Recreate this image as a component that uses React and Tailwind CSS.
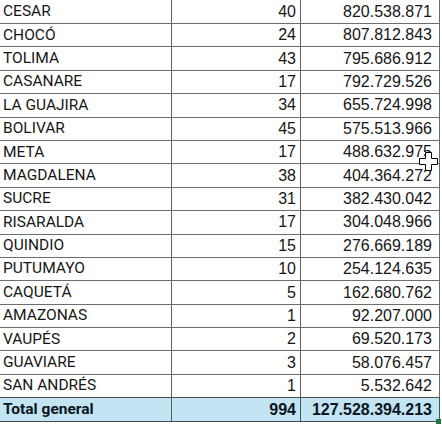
import React from "react";

const rows = [
  ["CESAR", "40", "820.538.871"],
  ["CHOCÓ", "24", "807.812.843"],
  ["TOLIMA", "43", "795.686.912"],
  ["CASANARE", "17", "792.729.526"],
  ["LA GUAJIRA", "34", "655.724.998"],
  ["BOLIVAR", "45", "575.513.966"],
  ["META", "17", "488.632.975"],
  ["MAGDALENA", "38", "404.364.272"],
  ["SUCRE", "31", "382.430.042"],
  ["RISARALDA", "17", "304.048.966"],
  ["QUINDIO", "15", "276.669.189"],
  ["PUTUMAYO", "10", "254.124.635"],
  ["CAQUETÁ", "5", "162.680.762"],
  ["AMAZONAS", "1", "92.207.000"],
  ["VAUPÉS", "2", "69.520.173"],
  ["GUAVIARE", "3", "58.076.457"],
  ["SAN ANDRÉS", "1", "5.532.642"],
];

export default function App() {
  return (
    <div className="relative w-[442px] h-[424px] overflow-hidden bg-white text-[#161616]">
      <div className="flex flex-col w-[440px]">
        {rows.map((r, i) => (
          <div
            key={r[0]}
            className={
              "flex box-border " +
              (i === 0 ? "h-[23px]" : "h-[23.4px] border-t border-[#6e6e6e]")
            }
          >
            <div
              className="w-[172px] pl-[3px] flex items-center text-[15.5px] border-r border-[#626262]"
              style={{ fontFamily: "Roboto, 'Liberation Sans', sans-serif" }}
            >
              {r[0]}
            </div>
            <div
              className="w-[129px] pr-[4px] flex items-center justify-end text-[16px] border-r border-[#626262]"
              style={{ fontFamily: "'Liberation Sans', Arial, sans-serif" }}
            >
              {r[1]}
            </div>
            <div
              className="flex-1 pr-[7px] flex items-center justify-end text-[16px] border-r border-[#5f6f6a]"
              style={{ fontFamily: "'Liberation Sans', Arial, sans-serif" }}
            >
              {r[2]}
            </div>
          </div>
        ))}
        <div className="flex box-border h-[24.6px] border-t border-b border-[#4a4a4a] bg-[#c2e4f3] text-[#0c1622] font-bold">
          <div
            className="w-[172px] pl-[3px] flex items-center text-[15.5px] border-r border-[#5a5a5a]"
            style={{ fontFamily: "Roboto, 'Liberation Sans', sans-serif" }}
          >
            Total general
          </div>
          <div
            className="w-[129px] pr-[4px] flex items-center justify-end text-[16px] border-r border-[#3f5a55]"
            style={{ fontFamily: "'Liberation Sans', Arial, sans-serif" }}
          >
            994
          </div>
          <div
            className="flex-1 pr-[7px] flex items-center justify-end text-[16px] border-r border-[#3f5a55]"
            style={{ fontFamily: "'Liberation Sans', Arial, sans-serif" }}
          >
            127.528.394.213
          </div>
        </div>
      </div>
      <div className="absolute left-[436px] top-[419px] w-[5px] h-[5px] bg-[#217346]" />
      <svg
        className="absolute left-[419px] top-[152px]"
        width="19"
        height="19"
        viewBox="0 0 19 19"
      >
        <path
          d="M6.5 0.5 H12.5 V6.5 H18.5 V12.5 H12.5 V18.5 H6.5 V12.5 H0.5 V6.5 H6.5 Z"
          fill="white"
          stroke="black"
          strokeWidth="1"
        />
      </svg>
    </div>
  );
}
